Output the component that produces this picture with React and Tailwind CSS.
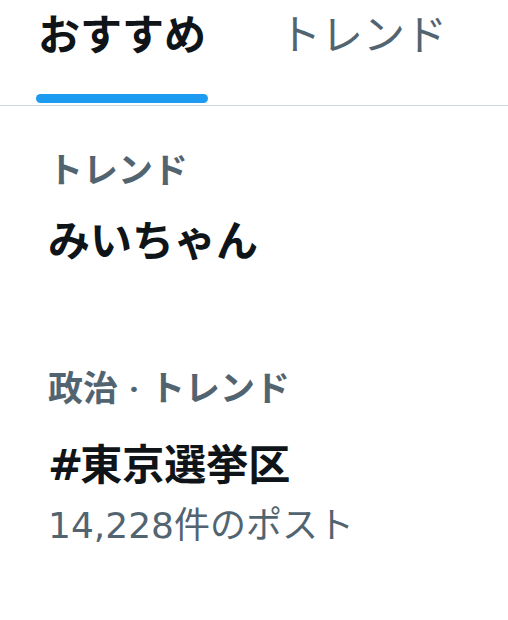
export default function App() {
  const font = { fontFamily: 'Roboto, "Noto Sans CJK JP", sans-serif' };
  const latin = { fontFamily: '"DejaVu Sans", Roboto, sans-serif' };
  return (
    <div className="w-[508px] h-[620px] bg-white overflow-hidden" style={font}>
      <div className="flex items-start border-b border-[#cfd9de]">
        <div className="ml-[36px] w-[172px] flex flex-col items-center pt-[15px] pb-[2px]">
          <span className="text-[42px] leading-[42px] font-bold text-[#0f1419] whitespace-nowrap">おすすめ</span>
          <div className="mt-[37px] h-[9px] w-full rounded-full bg-[#1d9bf0]" />
        </div>
        <div className="ml-[71px] pt-[15px]">
          <span className="text-[42px] leading-[42px] text-[#536471] whitespace-nowrap">トレンド</span>
        </div>
      </div>
      <div className="pl-[48px] flex flex-col">
        <div className="mt-[48px] text-[35px] leading-[35px] font-bold text-[#536471]">トレンド</div>
        <div className="mt-[32px] text-[42px] leading-[42px] font-bold text-[#0f1419]">みいちゃん</div>
        <div className="mt-[109px] text-[35px] leading-[35px] font-bold text-[#536471] whitespace-nowrap">
          <span>政治</span>
          <span className="px-[2px]"> · </span>
          <span>トレンド</span>
        </div>
        <div className="mt-[38px] text-[42px] leading-[42px] font-bold text-[#0f1419] whitespace-nowrap">
          <span style={latin} className="tracking-[-3px]">#</span>
          <span>東京選挙区</span>
        </div>
        <div className="mt-[21px] text-[36px] leading-[36px] text-[#536471] whitespace-nowrap">
          <span style={latin}>14,228</span>
          <span>件のポスト</span>
        </div>
      </div>
    </div>
  );
}
